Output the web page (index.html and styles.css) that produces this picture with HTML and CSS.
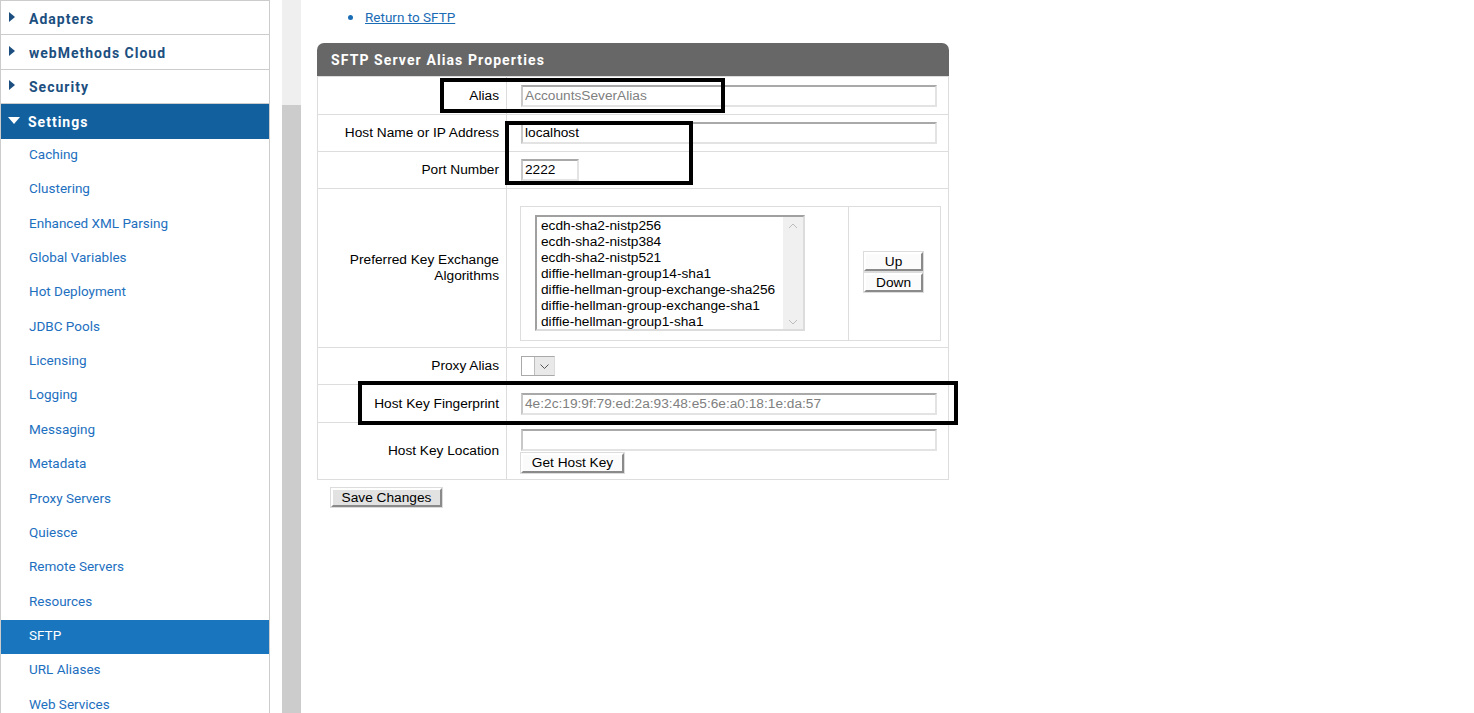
FILE: index.html
```html
<!DOCTYPE html>
<html lang="en">
<head>
    <meta charset="UTF-8">
    <title>SFTP Server Alias Properties</title>
    <link rel="stylesheet" href="styles.css">
</head>
<body>
    <div class="page">
        <div class="sidebar">
            <div class="menu-head"><span class="tri"></span>Adapters</div>
            <div class="menu-head"><span class="tri"></span>webMethods Cloud</div>
            <div class="menu-head"><span class="tri"></span>Security</div>
            <div class="menu-head open"><span class="tri down"></span>Settings</div>
            <a class="menu-item" href="#">Caching</a>
            <a class="menu-item" href="#">Clustering</a>
            <a class="menu-item" href="#">Enhanced XML Parsing</a>
            <a class="menu-item" href="#">Global Variables</a>
            <a class="menu-item" href="#">Hot Deployment</a>
            <a class="menu-item" href="#">JDBC Pools</a>
            <a class="menu-item" href="#">Licensing</a>
            <a class="menu-item" href="#">Logging</a>
            <a class="menu-item" href="#">Messaging</a>
            <a class="menu-item" href="#">Metadata</a>
            <a class="menu-item" href="#">Proxy Servers</a>
            <a class="menu-item" href="#">Quiesce</a>
            <a class="menu-item" href="#">Remote Servers</a>
            <a class="menu-item" href="#">Resources</a>
            <a class="menu-item active" href="#">SFTP</a>
            <a class="menu-item" href="#">URL Aliases</a>
            <a class="menu-item" href="#">Web Services</a>
        </div>

        <div class="strip"><div class="strip-top"></div></div>

        <div class="content">
            <ul class="links">
                <li><a href="#">Return to SFTP</a></li>
            </ul>

            <div class="panel">
                <div class="panel-head">SFTP Server Alias Properties</div>
                <table class="props">
                    <tr class="r-alias">
                        <td class="lbl">Alias</td>
                        <td><div class="field wide disabled">AccountsSeverAlias</div></td>
                    </tr>
                    <tr class="r-host">
                        <td class="lbl">Host Name or IP Address</td>
                        <td><div class="field wide">localhost</div></td>
                    </tr>
                    <tr class="r-port">
                        <td class="lbl">Port Number</td>
                        <td><div class="field port">2222</div></td>
                    </tr>
                    <tr class="r-kex">
                        <td class="lbl">Preferred Key Exchange<br>Algorithms</td>
                        <td class="kex-cell">
                            <table class="kex">
                                <tr>
                                    <td class="kex-list">
                                        <div class="listbox">
                                            <div class="options">
                                                <div>ecdh-sha2-nistp256</div>
                                                <div>ecdh-sha2-nistp384</div>
                                                <div>ecdh-sha2-nistp521</div>
                                                <div>diffie-hellman-group14-sha1</div>
                                                <div>diffie-hellman-group-exchange-sha256</div>
                                                <div>diffie-hellman-group-exchange-sha1</div>
                                                <div>diffie-hellman-group1-sha1</div>
                                            </div>
                                            <div class="vscroll">
                                                <svg width="10" height="6" viewBox="0 0 10 6"><path d="M1 5 L5 1 L9 5" fill="none" stroke="#bdbdbd" stroke-width="1"/></svg>
                                                <svg width="10" height="6" viewBox="0 0 10 6"><path d="M1 1 L5 5 L9 1" fill="none" stroke="#bdbdbd" stroke-width="1"/></svg>
                                            </div>
                                        </div>
                                    </td>
                                    <td class="kex-btns">
                                        <button class="btn small">Up</button>
                                        <button class="btn small">Down</button>
                                    </td>
                                </tr>
                            </table>
                        </td>
                    </tr>
                    <tr class="r-proxy">
                        <td class="lbl">Proxy Alias</td>
                        <td>
                            <div class="dropdown">
                                <span class="dd-val"></span>
                                <span class="dd-arrow"><svg width="9" height="5" viewBox="0 0 9 5"><path d="M0.5 0.5 L4.5 4.5 L8.5 0.5" fill="none" stroke="#555" stroke-width="1"/></svg></span>
                            </div>
                        </td>
                    </tr>
                    <tr class="r-finger">
                        <td class="lbl">Host Key Fingerprint</td>
                        <td><div class="field wide disabled">4e:2c:19:9f:79:ed:2a:93:48:e5:6e:a0:18:1e:da:57</div></td>
                    </tr>
                    <tr class="r-loc">
                        <td class="lbl">Host Key Location</td>
                        <td>
                            <div class="field wide"></div>
                            <button class="btn getkey">Get Host Key</button>
                        </td>
                    </tr>
                </table>
            </div>

            <button class="btn save">Save Changes</button>
        </div>

        <!-- annotation boxes drawn over the screenshot -->
        <div class="mark m-alias"></div>
        <div class="mark m-host"></div>
        <div class="mark m-finger"></div>
    </div>
</body>
</html>
```

FILE: styles.css
```css
body {
    margin: 0;
    background: #ffffff;
    font-family: "Liberation Sans", Arial, sans-serif;
    overflow: hidden;
}

.page {
    position: relative;
    display: flex;
    align-items: flex-start;
    height: 713px;
}

/* left navigation */
.sidebar {
    width: 268px;
    border-left: 1px solid #cccccc;
    border-right: 1px solid #cccccc;
    border-top: 1px solid #cccccc;
    display: flex;
    flex-direction: column;
    font-family: Roboto, "Liberation Sans", sans-serif;
    flex-shrink: 0;
}

.menu-head {
    height: 32.4px;
    border-bottom: 1px solid #cccccc;
    display: flex;
    align-items: center;
    padding-left: 8px;
    padding-top: 1px;
    font-size: 14px;
    font-weight: bold;
    letter-spacing: 1px;
    color: #1c4f80;
}

.menu-head:first-child {
    height: 31.4px;
    padding-top: 2px;
}

.menu-head.open {
    background: #13609f;
    color: #ffffff;
    border-bottom: none;
    height: 33.4px;
}

.tri {
    display: inline-block;
    width: 0;
    height: 0;
    border-top: 5px solid transparent;
    border-bottom: 5px solid transparent;
    border-left: 6px solid #1c4f80;
    margin-right: 14px;
    margin-top: -4px;
}

.tri.down {
    border-left: 6px solid transparent;
    border-right: 6px solid transparent;
    border-top: 7px solid #ffffff;
    border-bottom: none;
    margin-right: 8px;
    margin-top: -2px;
    margin-left: -1px;
}

.menu-item {
    height: 30.375px;
    padding-bottom: 4px;
    display: flex;
    align-items: center;
    padding-left: 28px;
    font-size: 13.5px;
    color: #1d6fc0;
    text-decoration: none;
}

.menu-item.active {
    background: #1976be;
    color: #ffffff;
}

/* grey frame strip */
.strip {
    width: 19px;
    height: 713px;
    margin-left: 12px;
    background: #cccccc;
    flex-shrink: 0;
}

.strip-top {
    height: 105px;
    background: #efefef;
}

/* main content */
.content {
    padding-left: 16px;
    font-size: 13.7px;
    color: #000000;
}

.links {
    margin: 9px 0 0 0;
    padding-left: 49px;
    line-height: 16px;
    list-style: none;
}

.links li {
    display: flex;
    align-items: center;
}

.links li::before {
    content: "";
    width: 5px;
    height: 5px;
    border-radius: 50%;
    background: #1a6cb5;
    margin: 1px 12px 0 -18px;
}

.links a {
    color: #1a6cb5;
    font-family: Roboto, "Liberation Sans", sans-serif;
    font-size: 13.5px;
}

.panel {
    width: 632px;
    margin-top: 18px;
}

.panel-head {
    height: 33px;
    background: #676767;
    border-radius: 7px 7px 0 0;
    color: #ffffff;
    font-family: Roboto, "Liberation Sans", sans-serif;
    font-weight: bold;
    font-size: 14px;
    letter-spacing: 1.1px;
    display: flex;
    align-items: center;
    padding-left: 14px;
}

.props {
    width: 632px;
    border-collapse: collapse;
}

.props > tbody > tr > td {
    border: 1px solid #dddddd;
    padding: 0 0 0 14px;
    vertical-align: middle;
}

.props > tbody > tr > td.lbl {
    width: 181px;
    text-align: right;
    padding: 0 7px 0 0;
    line-height: 16px;
}

.props > tbody > tr > td.kex-cell {
    padding-top: 10px;
}

.r-alias { height: 38px; }
.r-host { height: 37px; }
.r-port { height: 37px; }
.r-kex { height: 159px; }
.r-proxy { height: 37px; }
.r-finger { height: 38px; }
.r-loc { height: 57px; }

.field {
    box-sizing: border-box;
    height: 22px;
    border: 2px solid #e3e3e3;
    border-top-color: #a9a9a9;
    border-left-color: #c8c8c8;
    padding: 0 2px;
    line-height: 18px;
    background: #ffffff;
    color: #000000;
    white-space: nowrap;
}

.field.wide { width: 416px; }
.field.port { width: 58px; }
.field.disabled { color: #808080; }

/* nested key exchange table */
.kex {
    border-collapse: collapse;
    width: 421px;
    margin-left: -1px;
}

.kex td {
    border: 1px solid #dddddd;
    height: 131px;
    vertical-align: middle;
}

.kex-list {
    width: 312px;
    padding-left: 14px;
}

.kex-btns {
    text-align: center;
}

.listbox {
    box-sizing: border-box;
    width: 270px;
    height: 116px;
    border: 2px solid #a0a0a0;
    border-right-color: #dcdcdc;
    border-bottom-color: #dcdcdc;
    display: flex;
}

.options {
    flex: 1;
    padding: 1px 0 0 4px;
    line-height: 16px;
    white-space: nowrap;
}

.vscroll {
    width: 20px;
    background: #f0f0f0;
    display: flex;
    flex-direction: column;
    justify-content: space-between;
    align-items: center;
    padding: 6px 0 4px 0;
}

.btn {
    font-family: "Liberation Sans", Arial, sans-serif;
    font-size: 13.7px;
    background: #f0f0f0;
    border: 2px solid #ffffff;
    border-right-color: #8a8a8a;
    border-bottom-color: #8a8a8a;
    outline: 1px solid #dcdcdc;
    padding: 0;
    line-height: 14px;
    color: #000000;
}

.btn.small {
    display: block;
    width: 59px;
    height: 19px;
    margin: 0 auto 2px 14px;
    background: #fbfbfb;
}

.btn.getkey {
    display: block;
    width: 103px;
    height: 20px;
    margin-top: 2px;
    background: #fbfbfb;
}

.btn.save {
    width: 111px;
    height: 19px;
    margin: 8px 0 0 14px;
    background: #e2e2e2;
}

.dropdown {
    box-sizing: border-box;
    width: 34px;
    height: 20px;
    border: 1px solid #a9a9a9;
    border-right-color: #dcdcdc;
    display: flex;
}

.dd-val {
    width: 12px;
    background: #ffffff;
}

.dd-arrow {
    flex: 1;
    background: #e9e9e9;
    border-left: 1px solid #bdbdbd;
    display: flex;
    align-items: center;
    justify-content: center;
}

/* black highlight boxes */
.mark {
    position: absolute;
    border: 4px solid #000000;
}

.m-alias {
    left: 440px;
    top: 78px;
    width: 277px;
    height: 27px;
}

.m-host {
    left: 505px;
    top: 121px;
    width: 180px;
    height: 56px;
}

.m-finger {
    left: 358px;
    top: 381px;
    width: 592px;
    height: 36px;
}
```
